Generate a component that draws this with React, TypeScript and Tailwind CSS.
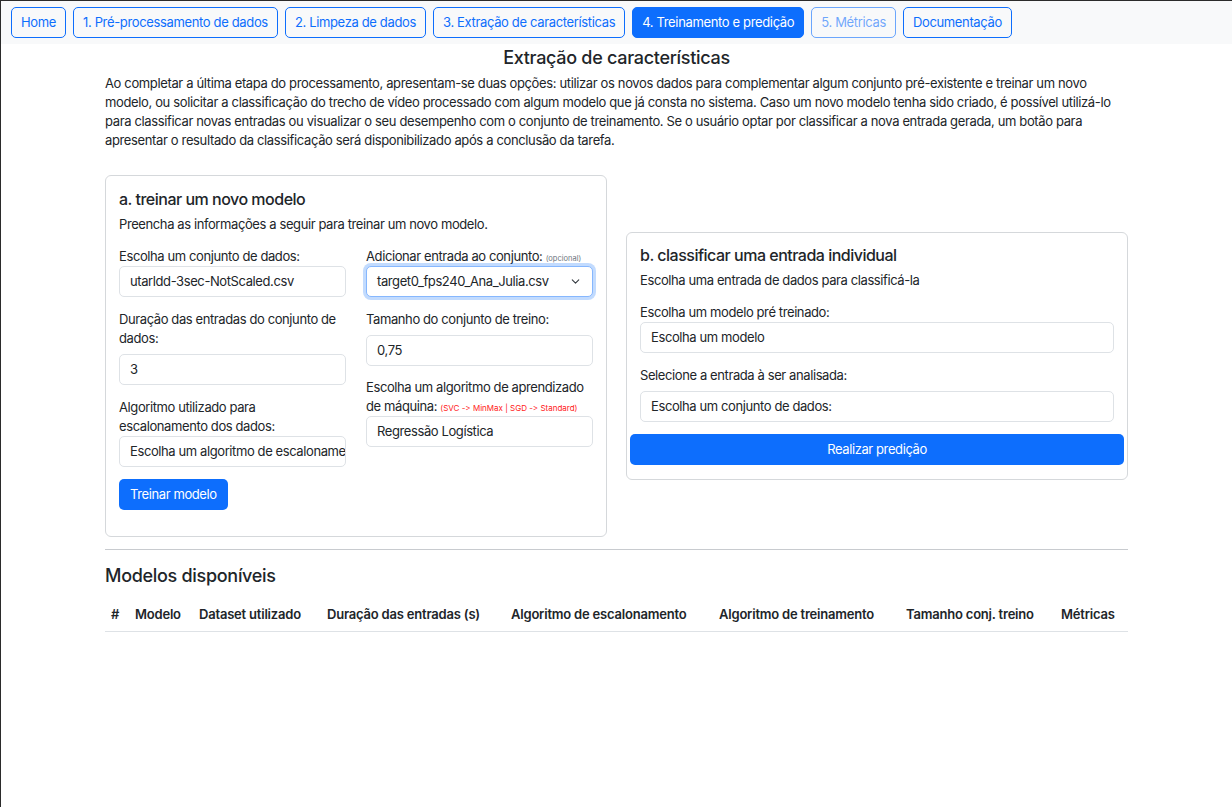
import React from 'react';
import { ChevronDown } from 'lucide-react';

const font = { fontFamily: 'Inter, "Liberation Sans", sans-serif', fontFeatureSettings: '"calt" 0' };

const navItems = [
  { label: 'Home', state: 'outline' },
  { label: '1. Pré-processamento de dados', state: 'outline' },
  { label: '2. Limpeza de dados', state: 'outline' },
  { label: '3. Extração de características', state: 'outline' },
  { label: '4. Treinamento e predição', state: 'active' },
  { label: '5. Métricas', state: 'disabled' },
  { label: 'Documentação', state: 'outline' },
];

const columns = [
  { label: '#', w: 'w-[24px]' },
  { label: 'Modelo', w: 'w-[64px]' },
  { label: 'Dataset utilizado', w: 'w-[128px]' },
  { label: 'Duração das entradas (s)', w: 'w-[184px]' },
  { label: 'Algoritmo de escalonamento', w: 'w-[208px]' },
  { label: 'Algoritmo de treinamento', w: 'w-[187px]' },
  { label: 'Tamanho conj. treino', w: 'w-[155px]' },
  { label: 'Métricas', w: 'w-[73px]' },
];

function Field({ value }: { value: string }) {
  return (
    <div className="h-[31px] w-full rounded-[5px] border border-[#dee2e6] bg-white px-[10px] flex items-center text-[13px] text-[#212529] overflow-hidden whitespace-nowrap">
      {value}
    </div>
  );
}

export default function App() {
  return (
    <div className="min-h-[807px] bg-white border-t border-l border-[#2b2b2b] text-[#212529]" style={font}>
      {/* Nav */}
      <div className="h-[43px] bg-[#f8f9fa] flex items-start gap-[7px] pl-[10px] pt-[6px]">
        {navItems.map((item) => (
          <button
            key={item.label}
            className={
              item.state === 'active'
                ? 'h-[31px] px-[9px] rounded-[5px] border border-[#0d6efd] bg-[#0d6efd] text-white text-[13px] tracking-[-0.35px]'
                : item.state === 'disabled'
                ? 'h-[31px] px-[9px] rounded-[5px] border border-[#0d6efd]/60 text-[#0d6efd]/60 text-[13px] tracking-[-0.35px]'
                : 'h-[31px] px-[9px] rounded-[5px] border border-[#0d6efd] text-[#0d6efd] text-[13px] tracking-[-0.35px]'
            }
          >
            {item.label}
          </button>
        ))}
      </div>

      <div className="w-[1023px] mx-auto">
        <h1 className="text-center text-[18px] leading-[26px] mt-[1px] font-medium tracking-[-0.3px]">Extração de características</h1>
        <p className="text-[13px] leading-[19px] mt-[3px] tracking-[-0.36px]">
          Ao completar a última etapa do processamento, apresentam-se duas opções: utilizar os novos dados para complementar algum conjunto pré-existente e treinar um novo modelo, ou solicitar a classificação do trecho de vídeo processado com algum modelo que já consta no sistema. Caso um novo modelo tenha sido criado, é possível utilizá-lo para classificar novas entradas ou visualizar o seu desempenho com o conjunto de treinamento. Se o usuário optar por classificar a nova entrada gerada, um botão para apresentar o resultado da classificação será disponibilizado após a conclusão da tarefa.
        </p>

        <div className="mt-[25px] grid grid-cols-2 gap-[19px] items-center">
          {/* Card A */}
          <div className="rounded-[6px] border border-[#d5d8db] px-[13px] pt-[11px] pb-[26px]">
            <h2 className="text-[16px] leading-[24px] font-medium tracking-[-0.5px]">a. treinar um novo modelo</h2>
            <p className="text-[13px] leading-[19px] mt-[4px] tracking-[-0.4px]">Preencha as informações a seguir para treinar um novo modelo.</p>
            <div className="mt-[13px] grid grid-cols-2 gap-x-[20px] text-[13px] leading-[19px] tracking-[-0.4px]">
              <div className="flex flex-col">
                <label>Escolha um conjunto de dados:</label>
                <Field value="utarldd-3sec-NotScaled.csv" />
                <label className="mt-[13px] mb-[6px]">Duração das entradas do conjunto de dados:</label>
                <Field value="3" />
                <label className="mt-[13px]">Algoritmo utilizado para escalonamento dos dados:</label>
                <Field value="Escolha um algoritmo de escalonamento" />
                <div className="mt-[12px]">
                  <button className="h-[31px] px-[11px] rounded-[5px] bg-[#0d6efd] text-white text-[13px] tracking-[-0.4px]">Treinar modelo</button>
                </div>
              </div>
              <div className="flex flex-col">
                <label className="whitespace-nowrap">
                  Adicionar entrada ao conjunto:{' '}
                  <span className="text-[7.5px] leading-none text-[#6c757d] tracking-normal">(opcional)</span>
                </label>
                <div className="h-[31px] w-full rounded-[5px] border border-[#86b7fe] ring-[3px] ring-[#0d6efd]/25 bg-white pl-[10px] pr-[10px] flex items-center justify-between text-[13px]">
                  <span>target0_fps240_Ana_Julia.csv</span>
                  <ChevronDown className="w-[13px] h-[13px] text-[#343a40]" strokeWidth={2} />
                </div>
                <label className="mt-[13px] mb-[6px]">Tamanho do conjunto de treino:</label>
                <Field value="0,75" />
                <label className="mt-[12px]">
                  Escolha um algoritmo de aprendizado de máquina:{' '}
                  <span className="text-[8px] leading-none text-[#ff1a1a] tracking-normal">(SVC -&gt; MinMax | SGD -&gt; Standard)</span>
                </label>
                <Field value="Regressão Logística" />
              </div>
            </div>
          </div>

          {/* Card B */}
          <div className="rounded-[6px] border border-[#d5d8db] px-[13px] pt-[10px] pb-[14px]">
            <h2 className="text-[16px] leading-[24px] font-medium tracking-[-0.5px]">b. classificar uma entrada individual</h2>
            <p className="text-[13px] leading-[19px] mt-[4px] tracking-[-0.4px]">Escolha uma entrada de dados para classificá-la</p>
            <div className="flex flex-col text-[13px] leading-[19px] tracking-[-0.4px]">
              <label className="mt-[13px]">Escolha um modelo pré treinado:</label>
              <Field value="Escolha um modelo" />
              <label className="mt-[13px] mb-[6px]">Selecione a entrada à ser analisada:</label>
              <Field value="Escolha um conjunto de dados:" />
              <button className="mt-[12px] mx-[-10px] h-[31px] rounded-[5px] bg-[#0d6efd] text-white text-[13px] tracking-[-0.4px]">Realizar predição</button>
            </div>
          </div>
        </div>

        <hr className="mt-[12px] border-t border-[#c8cbcf]" />

        <h2 className="mt-[14px] text-[18px] leading-[24px] font-medium tracking-[-0.3px]">Modelos disponíveis</h2>
        <table className="mt-[11px] w-full table-fixed text-[13px] tracking-[-0.2px]">
          <thead>
            <tr className="border-b border-[#dee2e6]">
              {columns.map((c) => (
                <th key={c.label} className={`${c.w} text-left font-semibold px-[6px] pt-[6px] pb-[6px] whitespace-nowrap`}>
                  {c.label}
                </th>
              ))}
            </tr>
          </thead>
        </table>
      </div>
    </div>
  );
}
